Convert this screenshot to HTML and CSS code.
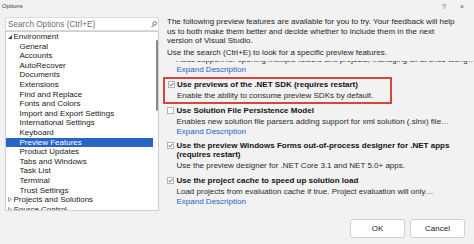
FILE: index.html
```html
<!DOCTYPE html>
<html lang="en">
<head>
<meta charset="utf-8">
<title>Options</title>
<link rel="stylesheet" href="styles.css">
</head>
<body>
<div class="window">
  <div class="titlebar">
    <span class="title">Options</span>
    <span class="tb-btns"><span>?</span><span>×</span></span>
  </div>
  <div class="content">
    <div class="left">
      <div class="search">
        <span class="ph">Search Options (Ctrl+E)</span>
        <svg class="mag" width="6" height="7" viewBox="0 0 6 7"><circle cx="3.7" cy="2.4" r="1.8" fill="none" stroke="#555" stroke-width="0.8"/><line x1="2.5" y1="3.7" x2="0.6" y2="6.2" stroke="#555" stroke-width="0.9"/></svg>
      </div>
      <div class="tree">
        <div class="tree-rows">
          <div class="node top"><svg class="tw" width="4" height="4" viewBox="0 0 4 4"><polygon points="4,0 4,4 0,4" fill="#444"/></svg>Environment</div>
          <div class="node child">General</div>
          <div class="node child">Accounts</div>
          <div class="node child">AutoRecover</div>
          <div class="node child">Documents</div>
          <div class="node child">Extensions</div>
          <div class="node child">Find and Replace</div>
          <div class="node child">Fonts and Colors</div>
          <div class="node child">Import and Export Settings</div>
          <div class="node child">International Settings</div>
          <div class="node child">Keyboard</div>
          <div class="node child sel">Preview Features</div>
          <div class="node child">Product Updates</div>
          <div class="node child">Tabs and Windows</div>
          <div class="node child">Task List</div>
          <div class="node child">Terminal</div>
          <div class="node child">Trust Settings</div>
          <div class="node top"><svg class="tw" width="4" height="5" viewBox="0 0 4 5"><polygon points="0.5,0.5 3.5,2.5 0.5,4.5" fill="none" stroke="#777" stroke-width="0.7"/></svg>Projects and Solutions</div>
          <div class="node top"><svg class="tw" width="4" height="5" viewBox="0 0 4 5"><polygon points="0.5,0.5 3.5,2.5 0.5,4.5" fill="none" stroke="#777" stroke-width="0.7"/></svg>Source Control</div>
        </div>
        <div class="tree-scroll"><div class="tree-thumb"></div></div>
      </div>
    </div>
    <div class="right">
      <p class="intro">The following preview features are available for you to try. Your feedback will help<br>us to both make them better and decide whether to include them in the next<br>version of Visual Studio.</p>
      <p class="intro intro2">Use the search (Ctrl+E) to look for a specific preview features.</p>
      <div class="viewport">
        <div class="list">
          <div class="item partial">
            <div class="ds">Adds support for opening multiple folders and projects, managing all at once along…</div>
            <div class="lnk">Expand Description</div>
          </div>
          <div class="item hl">
            <div class="hd"><span class="cb"><svg width="5" height="5" viewBox="0 0 5 5"><polyline points="0.6,2.6 1.9,3.9 4.4,1" fill="none" stroke="#333" stroke-width="0.8"/></svg></span><span>Use previews of the .NET SDK (requires restart)</span></div>
            <div class="ds">Enable the ability to consume preview SDKs by default.</div>
          </div>
          <div class="item">
            <div class="hd"><span class="cb"></span><span>Use Solution File Persistence Model</span></div>
            <div class="ds">Enables new solution file parsers adding support for xml solution (.slnx) file…</div>
            <div class="lnk">Expand Description</div>
          </div>
          <div class="item">
            <div class="hd"><span class="cb"><svg width="5" height="5" viewBox="0 0 5 5"><polyline points="0.6,2.6 1.9,3.9 4.4,1" fill="none" stroke="#333" stroke-width="0.8"/></svg></span><span>Use the preview Windows Forms out-of-process designer for .NET apps<br>(requires restart)</span></div>
            <div class="ds">Use the preview designer for .NET Core 3.1 and NET 5.0+ apps.</div>
          </div>
          <div class="item">
            <div class="hd"><span class="cb"><svg width="5" height="5" viewBox="0 0 5 5"><polyline points="0.6,2.6 1.9,3.9 4.4,1" fill="none" stroke="#333" stroke-width="0.8"/></svg></span><span>Use the project cache to speed up solution load</span></div>
            <div class="ds">Load projects from evaluation cache if true. Project evaluation will only…</div>
            <div class="lnk">Expand Description</div>
          </div>
        </div>
        <div class="vscroll">
          <span class="arr up"></span>
          <span class="spacer"></span>
          <span class="vthumb"></span>
          <span class="arr down"></span>
        </div>
      </div>
    </div>
  </div>
  <div class="footer">
    <button class="btn">OK</button>
    <button class="btn">Cancel</button>
  </div>
</div>
</body>
</html>
```

FILE: styles.css
```css
* { box-sizing: border-box; }
html, body { margin: 0; padding: 0; }
body {
  width: 474px;
  height: 244px;
  overflow: hidden;
  background: #f2f2f2;
  font-family: "Liberation Sans", Arial, sans-serif;
  font-size: 8px;
  color: #1a1a1a;
}
.window { display: flex; flex-direction: column; height: 244px; }

.titlebar {
  height: 17px;
  display: flex;
  justify-content: space-between;
  align-items: flex-start;
  padding: 2px 0 0 2px;
}
.title { font-size: 6px; line-height: 8px; color: #3a3a3a; }
.tb-btns {
  display: flex;
  gap: 14px;
  margin-right: 10px;
  font-size: 7px;
  line-height: 10px;
  color: #555;
}

.content { display: flex; height: 194px; padding-left: 5px; }

.left { width: 154px; display: flex; flex-direction: column; flex: none; }
.search {
  height: 14px;
  background: #fff;
  border: 1px solid #dadada;
  display: flex;
  align-items: center;
  justify-content: space-between;
  padding: 0 1px 0 2px;
}
.ph { font-size: 8.2px; color: #6e6e6e; }
.mag { display: block; }

.tree {
  height: 180px;
  border: 1px solid #cfcfcf;
  background: #fff;
  display: flex;
  overflow: hidden;
}
.tree-rows { width: 147px; flex: none; }
.node {
  height: 9.6px;
  line-height: 9.6px;
  white-space: nowrap;
  display: flex;
  align-items: center;
}
.top { padding-left: 2px; }
.child { padding-left: 13.5px; }
.tw { display: block; flex: none; margin-right: 1.5px; }
.sel { background: #2864c8; color: #fff; }
.tree-scroll { flex: 1; padding: 8px 0 0 2.5px; }
.tree-thumb { width: 2px; height: 71px; background: #8a8a8a; border-radius: 1px; }

.right {
  flex: 1;
  margin-left: 4px;
  margin-right: 9px;
  display: flex;
  flex-direction: column;
}
.intro { margin: 0; padding-left: 4px; line-height: 9.6px; white-space: nowrap; color: #1e1e1e; }
.intro2 { margin-top: 2px; }

.viewport { margin-top: 3.6px; height: 149px; display: flex; }
.list { flex: 1; overflow: hidden; }

.item {
  border: 1.5px solid transparent;
  padding: 1.5px 0 1.5px 3px;
}
.item.partial { margin-top: -8px; }
.item.hl {
  width: 229px;
  border: 2px solid #d4463f;
  padding: 1px 0 1px 2.5px;
}
.hd {
  display: flex;
  align-items: flex-start;
  font-weight: bold;
  line-height: 9px;
  margin-bottom: 2px;
  white-space: nowrap;
  color: #111;
}
.cb {
  width: 7px;
  height: 7px;
  margin-top: 1px;
  margin-right: 2.5px;
  border: 1px solid #b4b4b4;
  background: #fff;
  flex: none;
  display: flex;
  align-items: center;
  justify-content: center;
}
.cb svg { display: block; }
.ds, .lnk { padding-left: 9.5px; line-height: 9.6px; white-space: nowrap; color: #2a2a2a; }
.lnk { color: #1f5fc0; }

.vscroll {
  width: 8px;
  flex: none;
  display: flex;
  flex-direction: column;
  align-items: center;
  padding: 4px 0 2px;
}
.arr { width: 0; height: 0; border-left: 2px solid transparent; border-right: 2px solid transparent; }
.arr.up { border-bottom: 2px solid #a6a6a6; }
.arr.down { border-top: 2px solid #a6a6a6; margin-top: 3px; }
.spacer { flex: 1; }
.vthumb { width: 6px; height: 43px; background: #c6c6c6; border-radius: 3px; }

.footer {
  flex: 1;
  display: flex;
  justify-content: flex-end;
  align-items: flex-start;
  gap: 5px;
  padding: 8px 9px 0 0;
}
.btn {
  width: 55px;
  height: 19px;
  background: #fff;
  border: 1px solid #d0d0d0;
  border-radius: 3px;
  font-family: inherit;
  font-size: 8px;
  color: #1a1a1a;
  padding: 0;
}
```
